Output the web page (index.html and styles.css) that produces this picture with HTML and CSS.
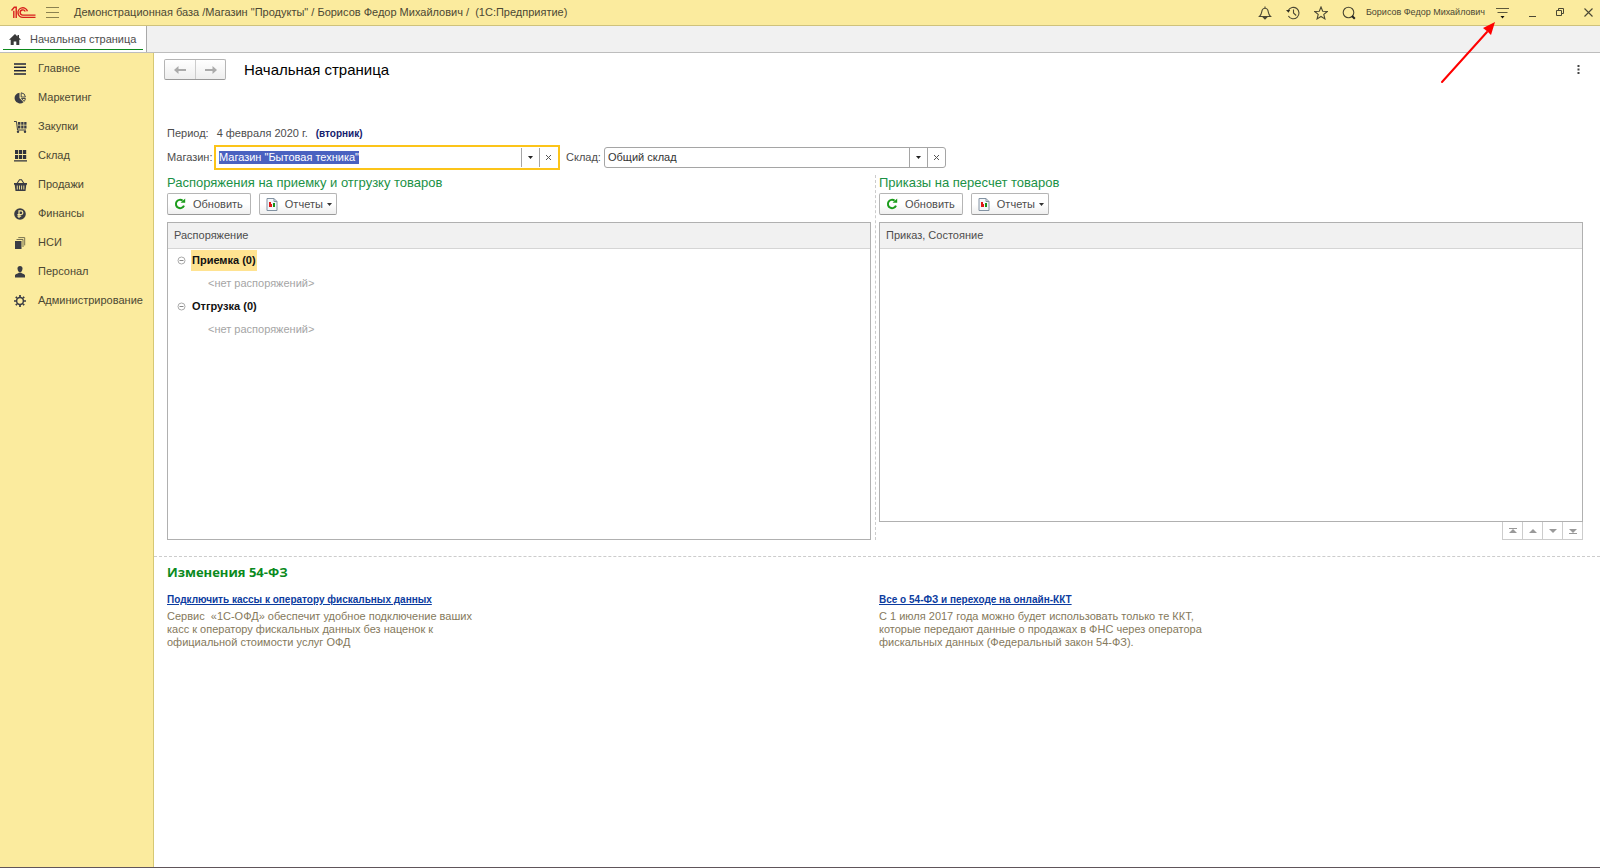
FILE: index.html
```html
<!DOCTYPE html>
<html lang="ru">
<head>
<meta charset="utf-8">
<meta name="viewport" content="width=device-width, initial-scale=1">
<title>Начальная страница</title>
<link rel="stylesheet" href="styles.css">
</head>
<body>
<svg class="defs" width="0" height="0" aria-hidden="true">
  <symbol id="refresh" viewBox="0 0 12 12"><path d="M10 7.6A4.2 4.2 0 1 1 8.6 2.6" fill="none" stroke="#1b9c1b" stroke-width="2"/><path d="M6.6 4.8h4.6V.4z" fill="#1b9c1b"/></symbol>
  <symbol id="report" viewBox="0 0 12 13"><path d="M1 .5h7l3 3v9H1z" fill="#f4f7fa" stroke="#8292a2"/><path d="M8 .5v3h3" fill="none" stroke="#8292a2"/><path d="M3 4h2v5H3z" fill="#e01818"/><path d="M5 6h1v3H5z" fill="#e01818"/><path d="M7 5h2v4H7z" fill="#189018"/></symbol>
  <symbol id="minus" viewBox="0 0 9 9"><circle cx="4.5" cy="4.5" r="3.5" fill="none" stroke="#aaa"/><path d="M2.5 4.5h4" stroke="#888"/></symbol>
</svg>

<header class="titlebar">
  <svg class="logo" width="25" height="14" viewBox="0 0 25 14" fill="none" stroke="#d8201c" stroke-width="1.4"><path d="M.5 4.5 3.3 1.2h1.9V12M2.8 4.7V12"/><path d="M16.4 5.3A4.8 4.8 0 1 0 12 11.4h12.5"/><path d="M14.2 5.6A2.6 2.6 0 1 0 12 9.1h12.5"/></svg>
  <button class="icon-btn menu-btn" aria-label="Главное меню"><svg width="13" height="11" viewBox="0 0 13 11" stroke="#8a8150"><path d="M0 .5h13M0 5.5h13M0 10.5h13"/></svg></button>
  <div class="app-title">Демонстрационная база /Магазин "Продукты" / Борисов Федор Михайлович /&nbsp; (1С:Предприятие)</div>
  <div class="tools">
    <button class="icon-btn" aria-label="Уведомления"><svg width="14" height="14" viewBox="0 0 14 14" fill="none" stroke="#4b4834" stroke-width="1.1"><path d="M1.5 10.5C4 8.5 3.300 5.500 4.500 3.500 5 2.600 6 2.200 7 2.200s2 .4 2.500 1.300C10.700 5.500 10 8.500 12.500 10.500z"/><path d="M7 .5v1.700"/><path d="M5.300 11.200h3.400L7 13z" fill="#302e22"/></svg></button>
    <button class="icon-btn" aria-label="История"><svg width="14" height="14" viewBox="0 0 14 14" fill="none" stroke="#4b4834" stroke-width="1.100"><path d="M2.200 4.500A5.700 5.700 0 1 1 2.400 10"/><path d="M7.500 3.500V7l2.700 2.500"/><path d="M0 4h4.200L2.500 6.700z" fill="#302e22" stroke="none"/></svg></button>
    <button class="icon-btn" aria-label="Избранное"><svg width="14" height="14" viewBox="0 0 14 14" fill="none" stroke="#4b4834" stroke-width="1.100"><path d="m7 1 1.700 4.200 4.600.3-3.500 2.900 1.100 4.500L7 10.500l-3.900 2.400 1.100-4.500L.7 5.500l4.600-.3z"/></svg></button>
    <button class="icon-btn" aria-label="Поиск"><svg width="14" height="14" viewBox="0 0 14 14" fill="none" stroke="#4b4834" stroke-width="1.100"><circle cx="6.500" cy="6.500" r="5.300"/><path d="m10 10 2.800 2.800" stroke="#222" stroke-width="2"/></svg></button>
  </div>
  <div class="user">Борисов Федор Михайлович</div>
  <div class="window-buttons">
    <button class="icon-btn" aria-label="Сервис и настройки"><svg width="13" height="12" viewBox="0 0 13 12"><path d="M0 1.500h13M1.500 5.500h10" stroke="#5c583c"/><path d="M4.500 9h4l-2 2.500z" fill="#111"/></svg></button>
    <button class="icon-btn" aria-label="Свернуть"><svg width="9" height="10" viewBox="0 0 9 10"><path d="M1 8.500h7" stroke="#4b4834"/></svg></button>
    <button class="icon-btn" aria-label="Восстановить"><svg width="9" height="9" viewBox="0 0 9 9" fill="none" stroke="#4b4834"><path d="M.5 2.500h5v5h-5zM2.500 2.500v-2h5v5h-2"/></svg></button>
    <button class="icon-btn" aria-label="Закрыть"><svg width="9" height="9" viewBox="0 0 9 9" stroke="#4b4834" stroke-width="1.100"><path d="m.5.5 8 8M8.500.5l-8 8"/></svg></button>
  </div>
</header>

<div class="tabs">
  <a class="tab" href="#"><svg width="12" height="11" viewBox="0 0 12 11" fill="#3a3a3a"><path d="M6 0 0 5.800h1.700V11h3V7.500h2.600V11h3V5.800H12L10 3.800V1H8.500v1.400z"/></svg><span>Начальная страница</span></a>
</div>

<div class="workspace">
  <nav class="sidebar">
    <a href="#"><svg width="12" height="12" viewBox="0 0 12 12" stroke="#22263a" stroke-width="1.500"><path d="M0 1h12M0 4.300h12M0 7.700h12M0 11h12"/></svg>Главное</a>
    <a href="#"><svg width="12" height="12" viewBox="0 0 12 12" fill="#3a3c44"><path d="M5.500.7V6l4 4.200A5.400 5.400 0 1 1 5.500.7z"/><path d="M7.200.8A4.600 4.600 0 0 1 11.400 5H7.200zM7.500 6.500h3.900a5 5 0 0 1-1.300 2.900z" fill="none" stroke="#3a3c44" stroke-width=".9"/></svg>Маркетинг</a>
    <a href="#"><svg width="13" height="12" viewBox="0 0 13 12" fill="#3a3c44"><path d="M0 .5h2.500L3.500 9H12" fill="none" stroke="#3a3c44"/><path d="M4 1h2.400v2.800H4zM7.200 1h2.300v2.800H7.200zM10.200 1h2.300v2.800h-2.300zM4 4.600h2.400v2.800H4zM7.200 4.600h2.300v2.800H7.200zM10.200 4.600h2.300v2.800h-2.300z"/><circle cx="4" cy="10.700" r="1.200"/><circle cx="11" cy="10.700" r="1.200"/></svg>Закупки</a>
    <a href="#"><svg width="13" height="12" viewBox="0 0 13 12" fill="#2f323c"><path d="M1 0h3.200v4H1zM5 0h3.200v4H5zM9 0h3.200v4H9zM1 5h3.200v4H1zM5 5h3.200v4H5zM9 5h3.200v4H9zM0 10.200h13v1.300H0z"/></svg>Склад</a>
    <a href="#"><svg width="13" height="12" viewBox="0 0 13 12" fill="#3a3c44"><path d="M3 4.500 5.500.7h2L10 4.500" fill="none" stroke="#3a3c44" stroke-width="1.100"/><path fill-rule="evenodd" d="M0 4h13v1.700h-.7L11.500 12h-10L.7 5.700H0zM2.800 6.500v4h.9v-4zM5 6.500v4h.9v-4zM7.200 6.500v4h.9v-4zM9.400 6.500v4h.9v-4z"/></svg>Продажи</a>
    <a href="#"><svg width="12" height="12" viewBox="0 0 12 12"><circle cx="6" cy="6" r="5.800" fill="#3a3c44"/><path d="M5 10V2.800h2a1.800 1.800 0 0 1 0 3.700H3.400M3.400 8.200h3.800" fill="none" stroke="#fbeb9e" stroke-width="1.200"/></svg>Финансы</a>
    <a href="#"><svg width="12" height="12" viewBox="0 0 12 12" fill="#3a3c44"><path d="M1 4h6.500v8H1z"/><path d="M2.500 2.500H9V10M4.300.6h6.400v7.800" fill="none" stroke="#77724f"/></svg>НСИ</a>
    <a href="#"><svg width="12" height="12" viewBox="0 0 12 12" fill="#3a3c44"><path d="M6 0c1.700 0 2.500 1 2.500 2.600S7.600 6.500 6 6.500 3.500 4.200 3.500 2.600 4.300 0 6 0z"/><path d="M1 11.500V9.600C1 8 3.500 8.300 4.700 6.800h2.600C8.500 8.300 11 8 11 9.600v1.900z"/></svg>Персонал</a>
    <a href="#"><svg width="12" height="12" viewBox="0 0 12 12" fill="none" stroke="#3a3c44"><circle cx="6" cy="6" r="3.400" stroke-width="1.500"/><path stroke-width="1.700" d="M6 0v2M6 10v2M0 6h2M10 6h2M1.800 1.800l1.300 1.300M8.900 8.900l1.300 1.300M1.800 10.200l1.300-1.300M8.900 3.100l1.300-1.300"/></svg>Администрирование</a>
  </nav>

  <main class="page">
    <div class="page-head">
      <div class="history">
        <button aria-label="Назад"><svg width="12" height="8" viewBox="0 0 12 8" fill="#aaa"><path d="M0 4 4.500 0v3H12v2H4.500v3z"/></svg></button>
        <button aria-label="Вперед"><svg width="12" height="8" viewBox="0 0 12 8" fill="#aaa"><path d="M12 4 7.500 0v3H0v2h7.500v3z"/></svg></button>
      </div>
      <h1>Начальная страница</h1>
      <button class="icon-btn more" aria-label="Еще"><svg width="3" height="9" viewBox="0 0 3 9" fill="#444"><path d="M.5 0h2v2h-2zM.5 3.500h2v2h-2zM.5 7h2v2h-2z"/></svg></button>
    </div>

    <div class="period"><span>Период:</span><span>4 февраля 2020 г.</span><b>(вторник)</b></div>

    <div class="filters">
      <label for="store">Магазин:</label>
      <div class="combo active">
        <input id="store" type="text" value='Магазин "Бытовая техника"'>
        <button aria-label="Выбрать магазин"><svg width="5" height="3" viewBox="0 0 5 3"><path d="M0 0h5L2.500 3z" fill="#222"/></svg></button>
        <button aria-label="Очистить магазин"><svg width="5" height="5" viewBox="0 0 5 5" stroke="#555"><path d="m0 0 5 5M5 0 0 5"/></svg></button>
      </div>
      <label for="stock" class="second">Склад:</label>
      <div class="combo">
        <input id="stock" type="text" value="Общий склад">
        <button aria-label="Выбрать склад"><svg width="5" height="3" viewBox="0 0 5 3"><path d="M0 0h5L2.500 3z" fill="#222"/></svg></button>
        <button aria-label="Очистить склад"><svg width="5" height="5" viewBox="0 0 5 5" stroke="#555"><path d="m0 0 5 5M5 0 0 5"/></svg></button>
      </div>
    </div>

    <div class="columns">
      <section class="column">
        <h2>Распоряжения на приемку и отгрузку товаров</h2>
        <div class="commands">
          <button class="cmd"><svg width="12" height="12"><use href="#refresh"/></svg><span>Обновить</span></button>
          <button class="cmd report"><svg width="12" height="13"><use href="#report"/></svg><span>Отчеты</span><svg class="caret" width="5" height="3" viewBox="0 0 5 3"><path d="M0 0h5L2.500 3z" fill="#333"/></svg></button>
        </div>
        <div class="list">
          <table>
            <thead><tr><th>Распоряжение</th></tr></thead>
            <tbody>
              <tr><td class="group"><button class="icon-btn" aria-label="Свернуть Приемка"><svg width="9" height="9"><use href="#minus"/></svg></button><b class="current">Приемка (0)</b></td></tr>
              <tr><td class="empty">&lt;нет распоряжений&gt;</td></tr>
              <tr><td class="group"><button class="icon-btn" aria-label="Свернуть Отгрузка"><svg width="9" height="9"><use href="#minus"/></svg></button><b>Отгрузка (0)</b></td></tr>
              <tr><td class="empty">&lt;нет распоряжений&gt;</td></tr>
            </tbody>
          </table>
        </div>
      </section>
      <section class="column right">
        <h2>Приказы на пересчет товаров</h2>
        <div class="commands">
          <button class="cmd"><svg width="12" height="12"><use href="#refresh"/></svg><span>Обновить</span></button>
          <button class="cmd report"><svg width="12" height="13"><use href="#report"/></svg><span>Отчеты</span><svg class="caret" width="5" height="3" viewBox="0 0 5 3"><path d="M0 0h5L2.500 3z" fill="#333"/></svg></button>
        </div>
        <div class="list">
          <table><thead><tr><th>Приказ, Состояние</th></tr></thead></table>
        </div>
        <div class="pager">
          <button aria-label="В начало"><svg width="8" height="6" viewBox="0 0 8 6" fill="#999"><path d="M0 0h8v1H0zM4 1l4 4H0z"/></svg></button>
          <button aria-label="Вверх"><svg width="8" height="4" viewBox="0 0 8 4" fill="#999"><path d="m4 0 4 4H0z"/></svg></button>
          <button aria-label="Вниз"><svg width="8" height="4" viewBox="0 0 8 4" fill="#999"><path d="m4 4 4-4H0z"/></svg></button>
          <button aria-label="В конец"><svg width="8" height="6" viewBox="0 0 8 6" fill="#999"><path d="M0 5h8v1H0zM4 5l4-4H0z"/></svg></button>
        </div>
      </section>
    </div>

    <section class="news">
      <h2>Изменения 54-ФЗ</h2>
      <div class="news-grid">
        <article>
          <a href="#">Подключить кассы к оператору фискальных данных</a>
          <p>Сервис&nbsp; «1С-ОФД» обеспечит удобное подключение ваших<br>касс к оператору фискальных данных без наценок к<br>официальной стоимости услуг ОФД</p>
        </article>
        <article>
          <a href="#">Все о 54-ФЗ и переходе на онлайн-ККТ</a>
          <p>С 1 июля 2017 года можно будет использовать только те ККТ,<br>которые передают данные о продажах в ФНС через оператора<br>фискальных данных (Федеральный закон 54-ФЗ).</p>
        </article>
      </div>
    </section>
  </main>
</div>

<svg class="pointer" width="58" height="64" viewBox="0 0 58 64" aria-hidden="true"><path d="M4 60 49 10" stroke="#f00" stroke-width="2" stroke-linecap="round"/><path d="M57 0 53 13 50 10 45 6z" fill="#f00"/></svg>
<script src="script.js"></script>
</body>
</html>
```
FILE: styles.css
```css
* { box-sizing: border-box; }

body {
  margin: 0;
  min-height: 100vh;
  display: flex;
  flex-direction: column;
  border-bottom: 1px solid #60555a;
  background: #fff;
  color: #4d4d4d;
  font: 11px/13px "Liberation Sans", Arial, sans-serif;
}

button, input { font: inherit; color: inherit; }
button { padding: 0; cursor: pointer; }
svg { display: block; flex: none; }
a { color: inherit; text-decoration: none; }
h1, h2, p { margin: 0; }
.defs { position: absolute; }

.icon-btn {
  display: flex;
  align-items: center;
  justify-content: center;
  border: 0;
  background: none;
}

/* Title bar */
.titlebar {
  display: flex;
  align-items: center;
  height: 26px;
  padding: 0 7px 0 11px;
  border-bottom: 1px solid #cfc27c;
  background: #fbeb9e;
}
.menu-btn { margin-left: 10px; }
.app-title { margin-left: 15px; color: #4b4834; }
.tools { display: flex; gap: 14px; margin-left: auto; }
.user { margin-left: 10px; font-size: 9px; color: #4b4834; }
.window-buttons { display: flex; align-items: center; gap: 19px; margin-left: 11px; }

/* Open pages */
.tabs {
  display: flex;
  height: 27px;
  border-bottom: 1px solid #bdbdbd;
  background: #f1f1f1;
}
.tab {
  position: relative;
  display: flex;
  align-items: center;
  gap: 9px;
  padding: 0 10px 0 9px;
  border-right: 1px solid #a9a9a9;
  background: #fff;
}
.tab::after {
  content: "";
  position: absolute;
  left: 3px;
  right: 3px;
  bottom: 2px;
  height: 1px;
  background: #0c8a1c;
}

.workspace { flex: 1; display: flex; }

/* Sections */
.sidebar {
  flex: none;
  width: 154px;
  padding-top: 1px;
  border-right: 1px solid #d6c873;
  background: #fbeb9e;
}
.sidebar a {
  display: grid;
  grid-template-columns: 24px auto;
  align-items: center;
  height: 29px;
  padding-left: 14px;
  color: #4b4834;
}

.page { flex: 1; min-width: 0; }

.page-head { display: flex; align-items: center; padding: 6px 20px 0 10px; }
.history {
  display: flex;
  border: 1px solid #b5b5b5;
  border-bottom-color: #999;
  border-radius: 2px;
  background: linear-gradient(#fff, #eee);
}
.history button {
  display: grid;
  place-items: center;
  width: 30px;
  height: 19px;
  border: 0;
  background: none;
}
.history button + button { border-left: 1px solid #ccc; }
h1 { margin-left: 18px; font-size: 15px; line-height: 20px; font-weight: 400; color: #000; }
.more { margin-left: auto; }

.period { display: flex; gap: 8px; margin: 47px 13px 0; }
.period b { color: #14216e; font-size: 10px; }

.filters { display: flex; align-items: center; height: 25px; margin: 5px 13px 0; }
.filters label { width: 47px; }
.filters label.second { width: 38px; margin-left: 6px; }
.combo {
  display: flex;
  width: 342px;
  height: 21px;
  border: 1px solid #a5a5a5;
  border-radius: 3px;
  background: #fff;
}
.combo input {
  flex: 1;
  min-width: 0;
  padding: 0 3px;
  border: 0;
  outline: 0;
  background: none;
  color: #333;
}
.combo input::selection { background: #4a62c0; color: #fff; }
.combo button {
  display: grid;
  place-items: center;
  width: 18px;
  border: 0;
  border-left: 1px solid #a5a5a5;
  background: none;
}
.combo.active { width: 346px; height: 25px; padding: 1px; border: 2px solid #fcc419; border-radius: 0; }
.combo.active input { padding: 0 2px; }

/* Lists */
.columns {
  display: grid;
  grid-template-columns: 1fr 1fr;
  padding: 5px 17px 16px 13px;
  border-bottom: 1px dashed #ccc;
}
.column { display: flex; flex-direction: column; min-height: 365px; padding-right: 4px; }
.column.right { padding: 0 0 0 3px; border-left: 1px dashed #ccc; }
h2 { font-size: 13px; line-height: 16px; font-weight: 400; color: #1b9146; }
.commands { display: flex; gap: 8px; margin: 2px 0 7px; }
.cmd {
  display: flex;
  align-items: center;
  gap: 7px;
  height: 22px;
  padding: 0 7px 0 6px;
  border: 1px solid #b5b5b5;
  border-bottom-color: #999;
  border-radius: 2px;
  background: linear-gradient(#fff 50%, #efefef);
}
.cmd.report { padding: 0 4px 0 6px; }
.cmd .caret { margin-left: -3px; }
.list { flex: 1; border: 1px solid #b0b0b0; }
table { width: 100%; border-collapse: collapse; }
th {
  height: 25px;
  padding: 0 6px;
  border-bottom: 1px solid #d5d5d5;
  background: #f1f1f1;
  text-align: left;
  font-weight: 400;
}
td { height: 23px; padding: 0; }
.group { display: flex; align-items: center; gap: 5px; padding-left: 9px; color: #111; }
.group b { padding: 4px 1px; }
.group .current { background: #ffe391; }
.empty { padding-left: 40px; color: #a5a5a5; }
.pager { display: flex; align-self: flex-end; border-right: 1px solid #ccc; }
.pager button {
  display: grid;
  place-items: center;
  width: 20px;
  height: 18px;
  border: 1px solid #ccc;
  border-width: 0 0 1px 1px;
  background: #fff;
}

/* News */
.news { padding: 7px 17px 24px 13px; }
.news h2 { font: bold 13px/16px "Open Sans", sans-serif; color: #0a8a20; }
.news-grid { display: grid; grid-template-columns: 1fr 1fr; margin-top: 13px; }
.news-grid article + article { padding-left: 4px; }
.news a { color: #0c3ca0; font-size: 10px; font-weight: 700; text-decoration: underline; }
.news p { margin-top: 4px; color: #85795c; }

.pointer { position: absolute; top: 22px; right: 104px; }
```
FILE: script.js
```js
const store = document.getElementById("store");
store.focus();
store.select();
```
